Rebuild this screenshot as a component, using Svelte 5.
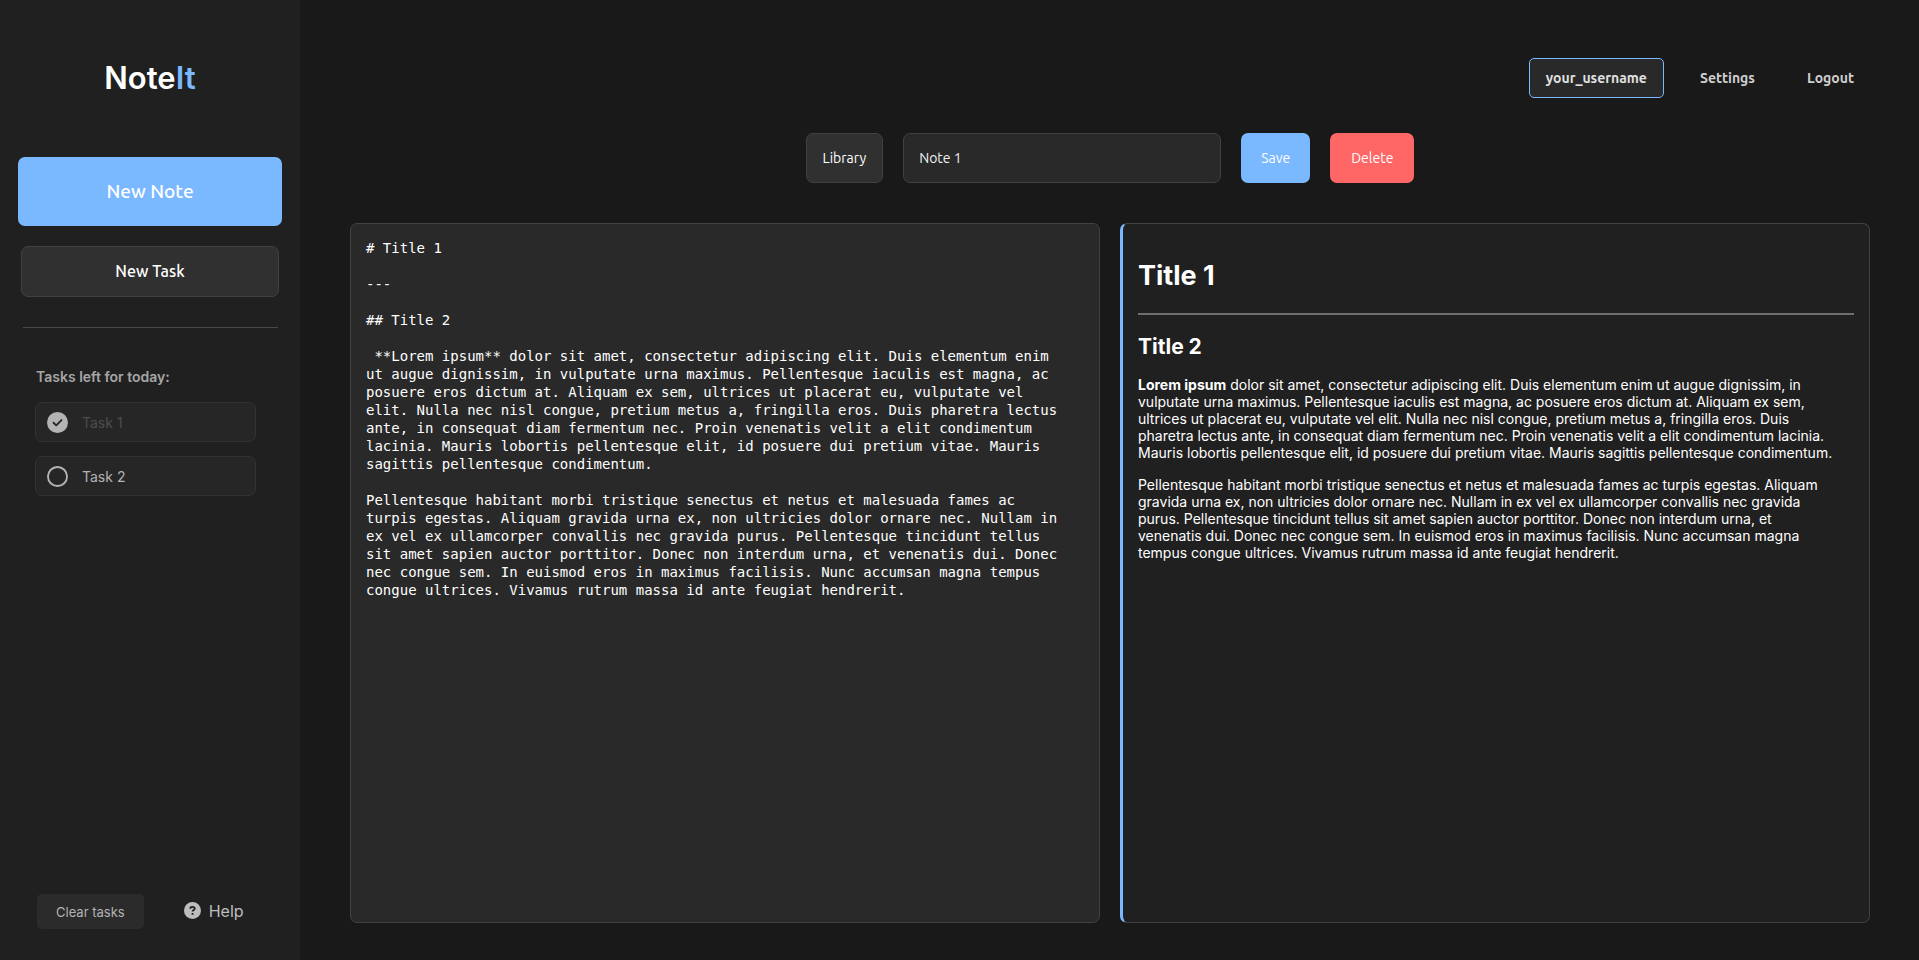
<script>
  let tasks = $state([
    { name: 'Task 1', done: true },
    { name: 'Task 2', done: false },
  ]);
  let title = $state('Note 1');

  const first =
    'dolor sit amet, consectetur adipiscing elit. Duis elementum enim ut augue dignissim, in vulputate urna maximus. Pellentesque iaculis est magna, ac posuere eros dictum at. Aliquam ex sem, ultrices ut placerat eu, vulputate vel elit. Nulla nec nisl congue, pretium metus a, fringilla eros. Duis pharetra lectus ante, in consequat diam fermentum nec. Proin venenatis velit a elit condimentum lacinia. Mauris lobortis pellentesque elit, id posuere dui pretium vitae. Mauris sagittis pellentesque condimentum.';
  const second =
    'Pellentesque habitant morbi tristique senectus et netus et malesuada fames ac turpis egestas. Aliquam gravida urna ex, non ultricies dolor ornare nec. Nullam in ex vel ex ullamcorper convallis nec gravida purus. Pellentesque tincidunt tellus sit amet sapien auctor porttitor. Donec non interdum urna, et venenatis dui. Donec nec congue sem. In euismod eros in maximus facilisis. Nunc accumsan magna tempus congue ultrices. Vivamus rutrum massa id ante feugiat hendrerit.';
  let source = $state(`# Title 1\n\n---\n\n## Title 2\n\n **Lorem ipsum** ${first}\n\n${second}`);

  function clearTasks() {
    tasks = tasks.filter((task) => !task.done);
  }
</script>

<div class="page">
  <aside class="sidebar">
    <h1 class="logo">Note<span>It</span></h1>
    <button class="new-note" type="button">New Note</button>
    <button class="new-task" type="button">New Task</button>
    <hr class="divider" />
    <section class="tasks">
      <h2>Tasks left for today:</h2>
      {#each tasks as task}
        <label class="task" class:done={task.done}>
          <span class="tick">
            <input type="checkbox" bind:checked={task.done} />
            <svg viewBox="0 0 20 20" aria-hidden="true">
              {#if task.done}
                <circle cx="10" cy="10" r="10" fill="#b3b3b3" />
                <path d="M6.2 10.3 8.8 12.7 13.8 7.7" fill="none" stroke="#262626" stroke-width="1.8" stroke-linecap="round" stroke-linejoin="round" />
              {:else}
                <circle cx="10" cy="10" r="9.1" fill="none" stroke="#b3b3b3" stroke-width="1.8" />
              {/if}
            </svg>
          </span>
          <span>{task.name}</span>
        </label>
      {/each}
    </section>
    <footer class="foot">
      <button class="clear" type="button" onclick={clearTasks}>Clear tasks</button>
      <a class="help" href="#help">
        <svg viewBox="0 0 16 16" aria-hidden="true">
          <circle cx="8" cy="8" r="8" fill="#bdbdbd" />
          <path d="M6 6.3V5.9C6 4.9 6.9 4.5 8 4.5c1.2 0 2.1.6 2.1 1.6 0 1.5-2 1.4-2 2.9" fill="none" stroke="#202020" stroke-width="1.7" />
          <rect x="7.1" y="10.3" width="1.9" height="1.8" rx=".6" fill="#202020" />
        </svg>
        <span>Help</span>
      </a>
    </footer>
  </aside>

  <main class="main">
    <nav class="nav">
      <a class="user" href="#profile">your_username</a>
      <a href="#settings">Settings</a>
      <a href="#logout">Logout</a>
    </nav>
    <div class="toolbar">
      <button class="library" type="button">Library</button>
      <input class="title" type="text" aria-label="Note title" bind:value={title} />
      <button class="save" type="button">Save</button>
      <button class="delete" type="button">Delete</button>
    </div>
    <div class="panes">
      <textarea class="editor" aria-label="Note source" spellcheck="false" bind:value={source}></textarea>
      <article class="preview">
        <h1>Title 1</h1>
        <hr />
        <h2>Title 2</h2>
        <p><strong>Lorem ipsum</strong> {first}</p>
        <p>{second}</p>
      </article>
    </div>
  </main>
</div>

<style>
  :global(body) {
    margin: 0;
    background: #191919;
  }

  .page {
    --ui: Ubuntu, 'Noto Sans', sans-serif;
    display: grid;
    grid-template-columns: 300px 1fr;
    min-height: 100vh;
    background: #191919;
    color: #fff;
    font-family: Inter, sans-serif;
  }

  .page * {
    box-sizing: border-box;
  }

  button {
    border: 0;
    cursor: pointer;
    color: #fff;
    font-family: var(--ui);
  }

  a {
    text-decoration: none;
  }

  .sidebar {
    display: flex;
    flex-direction: column;
    padding: 58px 18px 31px;
    background: #202020;
  }

  .logo {
    margin: 0 0 59px;
    font-size: 31px;
    font-weight: 600;
    line-height: 40px;
    text-align: center;
  }

  .logo span {
    color: #7ab8ff;
  }

  .new-note {
    height: 69px;
    padding: 0 0 2px;
    border-radius: 7px;
    background: #7ab8ff;
    font-size: 19px;
    font-weight: 500;
  }

  .new-task {
    height: 51px;
    margin: 20px 3px 0;
    padding: 0 0 2px;
    border: 1px solid #414141;
    border-radius: 7px;
    background: #303030;
    font-size: 16px;
    font-weight: 500;
  }

  .divider {
    width: 255px;
    height: 1px;
    margin: 30px auto 0;
    border: 0;
    background: #484848;
  }

  .tasks {
    display: flex;
    flex-direction: column;
    gap: 14px;
    margin: 39px 26px 0 17px;
  }

  .tasks h2 {
    margin: 0;
    padding: 0 1px 1px;
    color: #a6a6a6;
    font-size: 14px;
    font-weight: 600;
    line-height: 20px;
  }

  .task {
    display: flex;
    align-items: center;
    gap: 14px;
    height: 40px;
    padding: 0 11px;
    border: 1px solid #323232;
    border-radius: 7px;
    background: #262626;
    color: #b3b3b3;
    font-size: 14px;
  }

  .task.done {
    color: #4d4d4d;
  }

  .tick {
    display: grid;
    width: 21px;
    height: 21px;
  }

  .tick input,
  .tick svg {
    grid-area: 1 / 1;
    width: 100%;
    height: 100%;
    margin: 0;
  }

  .tick input {
    opacity: 0;
  }

  .tick svg {
    pointer-events: none;
  }

  .foot {
    display: flex;
    align-items: center;
    gap: 40px;
    margin-top: auto;
    padding-left: 19px;
  }

  .clear {
    height: 35px;
    padding: 0 19px;
    border-radius: 5px;
    background: #2b2b2b;
    color: #b3b3b3;
    font-family: Inter, sans-serif;
    font-size: 13px;
  }

  .help {
    display: flex;
    align-items: center;
    gap: 8px;
    padding-bottom: 2px;
    color: #bdbdbd;
    font-size: 16px;
  }

  .help svg {
    width: 17px;
    height: 17px;
  }

  .main {
    display: flex;
    flex-direction: column;
    min-width: 0;
    padding: 58px 49px 37px 50px;
  }

  .nav {
    display: flex;
    align-items: center;
    justify-content: flex-end;
    gap: 20px;
  }

  .nav a {
    padding: 0 15px;
    border: 1px solid transparent;
    border-radius: 5px;
    color: #cfcfcf;
    font-family: var(--ui);
    font-size: 14px;
    font-weight: 600;
    line-height: 38px;
  }

  .nav .user {
    padding: 0 16px;
    border-color: #7ab8ff;
    background: #292929;
    color: #e0e0e0;
  }

  .toolbar {
    display: flex;
    justify-content: center;
    gap: 20px;
    margin: 35px 0 40px;
  }

  .toolbar button,
  .toolbar input {
    height: 50px;
    padding: 0 15px;
    border-radius: 7px;
    font-family: var(--ui);
    font-size: 14px;
  }

  .toolbar .library {
    padding: 0 16px;
    border: 1px solid #414141;
    background: #303030;
  }

  .toolbar .title {
    width: 318px;
    border: 1px solid #414141;
    background: #292929;
    color: #f0f0f0;
  }

  .toolbar .save {
    padding: 0 20px;
    background: #7ab8ff;
  }

  .toolbar .delete {
    padding: 0 21px;
    background: #ff6666;
  }

  .panes {
    display: grid;
    flex: 1;
    grid-template-columns: 1fr 1fr;
    gap: 20px;
  }

  .editor,
  .preview {
    min-width: 0;
    border: 1px solid #414141;
    border-radius: 7px;
  }

  .editor {
    display: block;
    width: 100%;
    height: 100%;
    padding: 15px 32px 15px 15px;
    background: #292929;
    color: #fff;
    font-family: 'DejaVu Sans Mono', monospace;
    font-size: 14px;
    line-height: 18px;
    resize: none;
  }

  .preview {
    padding: 15px;
    border-left: 3px solid #7ab8ff;
    background: #202020;
    font-size: 14px;
    line-height: 17px;
  }

  .preview h1 {
    margin: 20px 0;
    font-size: 27px;
    line-height: 34px;
  }

  .preview hr {
    height: 2px;
    margin: 0 0 19px;
    border: 0;
    background: #6e6e6e;
  }

  .preview h2 {
    margin: 0 0 16px;
    font-size: 21px;
    line-height: 26px;
  }

  .preview p {
    margin: 0 0 15px;
    padding-right: 16px;
  }
</style>
